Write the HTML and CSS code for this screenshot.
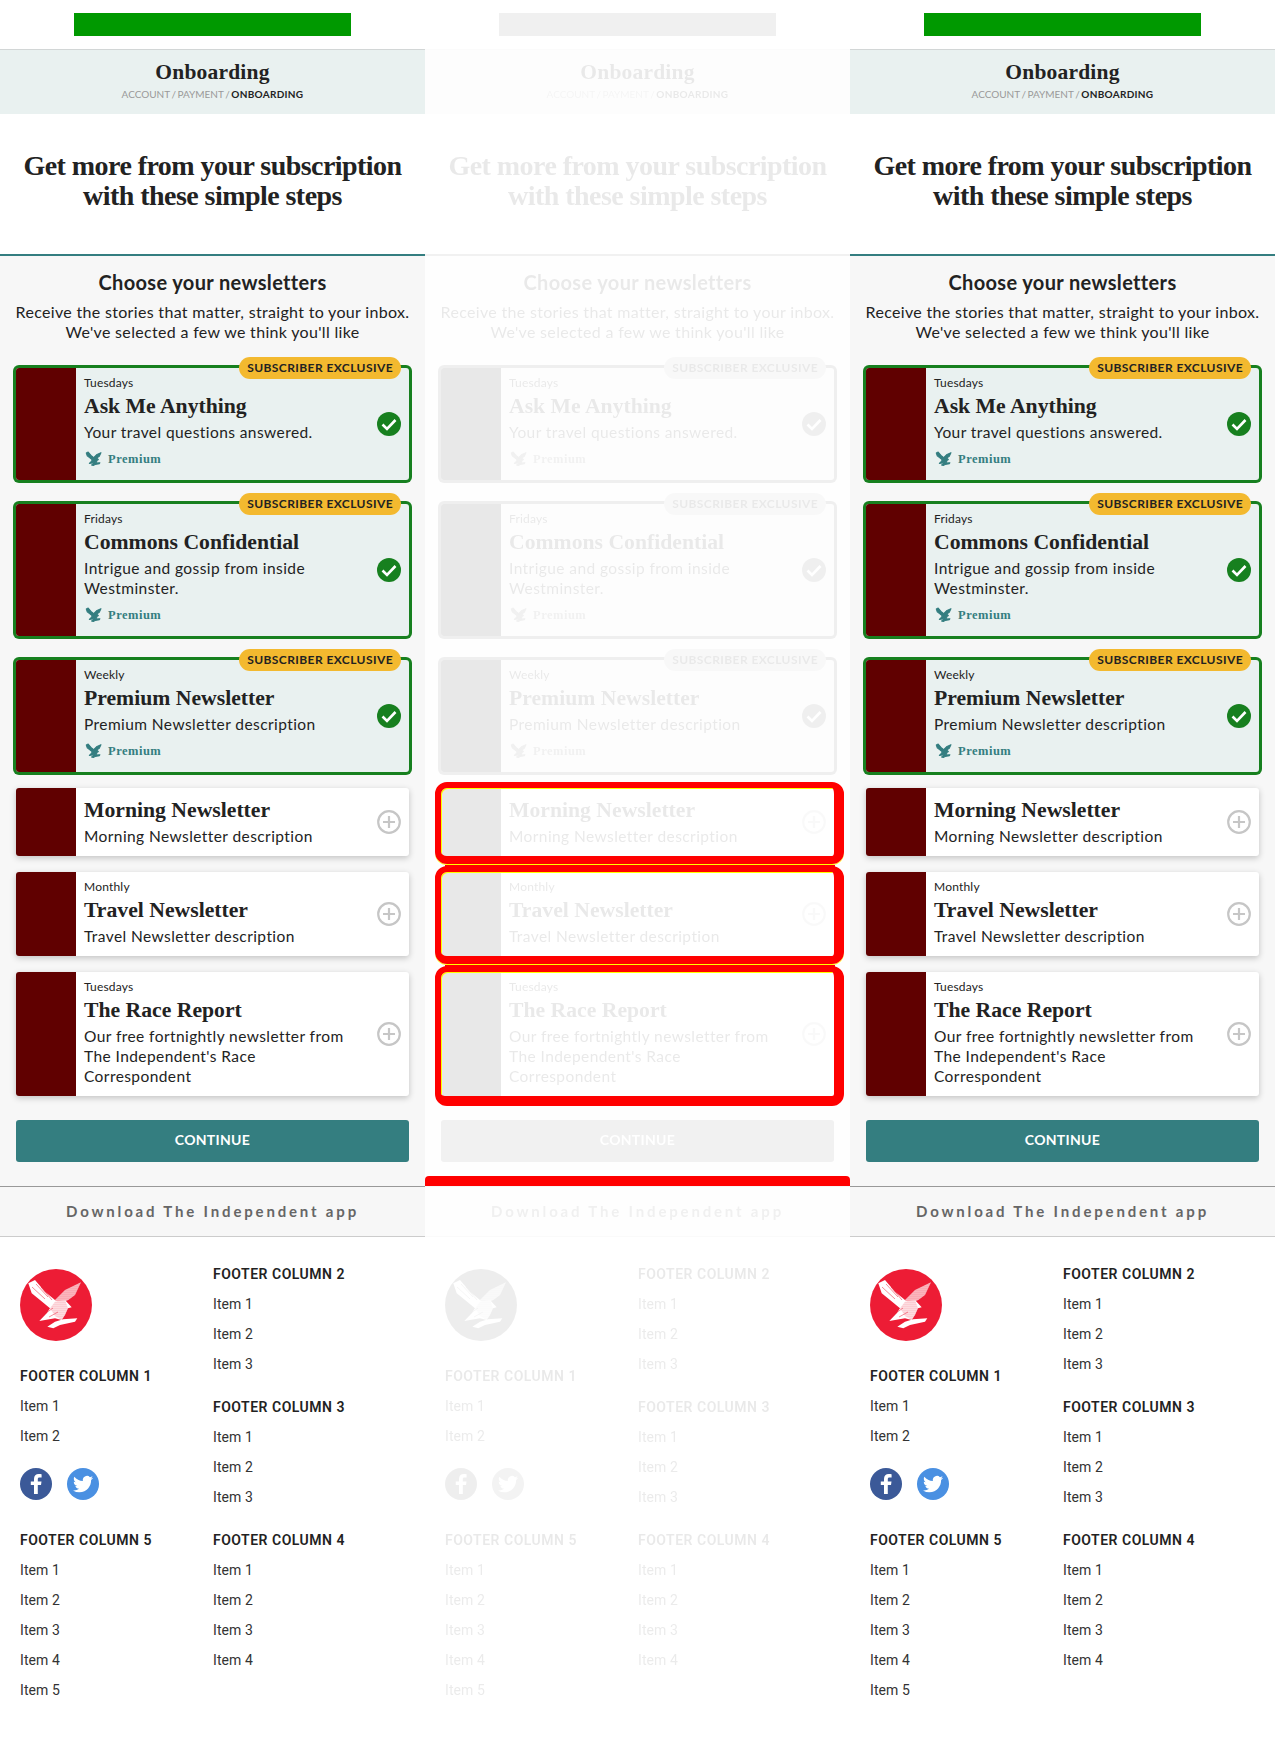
FILE: index.html
```html
<!DOCTYPE html>
<html lang="en">
<head>
<meta charset="utf-8">
<title>Onboarding</title>
<link rel="stylesheet" href="styles.css">
</head>
<body>
<svg class="defs" width="0" height="0" aria-hidden="true">
  <defs>
    <pattern id="dots" width="2" height="2" patternUnits="userSpaceOnUse">
      <circle cx="1" cy="1" r=".5" fill="#ed1c35"/>
    </pattern>
    <symbol id="eagle" viewBox="0 0 72 72">
      <path d="M8.3 14.3 15 11 25 22.7 35 31 45 21 61 13.3 55 26 48.3 31 45 31 51.7 38.3 48 39.3 45 46 41.7 50.3 57.3 49.3 55 52.7 40 56 33.3 59.3 27.3 57.7 35 52.7 35 49.3 19.3 52 26.7 44.3 30 39.3 20 31 11.7 24.3Z" fill="currentColor" stroke="currentColor" stroke-width="4" stroke-linejoin="round"/>
    </symbol>
    <symbol id="check" viewBox="0 0 24 24">
      <circle cx="12" cy="12" r="12" fill="#17801f"/>
      <path d="M5.5 12.5 10 17 18.5 8" fill="none" stroke="#fff" stroke-width="2.6"/>
    </symbol>
    <symbol id="plus" viewBox="0 0 24 24">
      <circle cx="12" cy="12" r="10.8" fill="none" stroke="#c6c6c6" stroke-width="2.2"/>
      <path d="M12 6v12M6 12h12" fill="none" stroke="#c6c6c6" stroke-width="2.2"/>
    </symbol>
    <symbol id="logo" viewBox="0 0 72 72">
      <circle cx="36" cy="36" r="36" fill="#ed1c35"/>
      <path d="M8.3 14.3 15 11 25 22.7 35 31 39 33 35 38 30 39.3 20 31 11.7 24.3Z" fill="#fff"/>
      <path d="M61 13.3 55 26 48.3 31 40 34.3 35 31 45 21Z" fill="#fff" fill-opacity=".8"/>
      <path d="M61 13.3 55 26 48.3 31 40 34.3 35 31 45 21Z" fill="url(#dots)"/>
      <path d="M35 32.7 45 31 51.7 38.3 48 39.3 45 46 41.7 51 35 49.3 19.3 52 26.7 44.3 30 39.3Z" fill="#fff"/>
      <path d="M35 32.7 45 31 48 39.3 45 46 41.7 51 35 47 30 39.3Z" fill="url(#dots)"/>
      <path d="M43 50.3 57.3 49.3 55 52.7 40 56 33.3 59.3 27.3 57.7 35 52.7Z" fill="#fff"/>
      <path d="M12 18 25 30M16 15 28 28M21 18 32 31M26 44 33 39M29 48 38 43" fill="none" stroke="#ed1c35" stroke-width=".5"/>
    </symbol>
    <symbol id="facebook" viewBox="0 0 32 32">
      <circle cx="16" cy="16" r="16" fill="#3b5998"/>
      <path d="M17.8 26v-9h3.2l.5-3.6h-3.7v-2.1c0-1 .4-1.7 1.8-1.7h2V6.3c-.4 0-1.5-.2-2.9-.2-2.8 0-4.7 1.7-4.7 4.8v2.5h-3.2V17H14v9z" fill="#fff"/>
    </symbol>
    <symbol id="twitter" viewBox="0 0 32 32">
      <circle cx="16" cy="16" r="16" fill="#4a90e2"/>
      <g transform="translate(6 6) scale(.84)">
        <path d="M23.953 4.57a10 10 0 01-2.825.775 4.958 4.958 0 002.163-2.723c-.951.555-2.005.959-3.127 1.184a4.92 4.92 0 00-8.384 4.482C7.69 8.095 4.067 6.13 1.64 3.162a4.822 4.822 0 00-.666 2.475c0 1.71.87 3.213 2.188 4.096a4.904 4.904 0 01-2.228-.616v.06a4.923 4.923 0 003.946 4.827 4.996 4.996 0 01-2.212.085 4.936 4.936 0 004.604 3.417 9.867 9.867 0 01-6.102 2.105c-.39 0-.779-.023-1.17-.067a13.995 13.995 0 007.557 2.209c9.053 0 13.998-7.496 13.998-13.985 0-.21 0-.42-.015-.63A9.935 9.935 0 0024 4.59z" fill="#fff"/>
      </g>
    </symbol>
  </defs>
</svg>

<div class="stage">

  <!-- Column 1 -->
  <div class="screen">
    <header class="masthead"><div class="brand-bar"></div></header>
    <div class="crumbs">
      <div class="crumbs-title">Onboarding</div>
      <div class="crumbs-path">ACCOUNT / PAYMENT / <b>ONBOARDING</b></div>
    </div>
    <div class="hero"><h1>Get more from your subscription<br>with these simple steps</h1></div>
    <main class="panel">
      <h2>Choose your newsletters</h2>
      <p class="lede">Receive the stories that matter, straight to your inbox.<br>We've selected a few we think you'll like</p>
      <div class="list">
        <article class="card selected">
          <span class="badge">SUBSCRIBER EXCLUSIVE</span>
          <div class="thumb"></div>
          <div class="body">
            <div class="day">Tuesdays</div>
            <h3>Ask Me Anything</h3>
            <p>Your travel questions answered.</p>
            <div class="premium"><svg class="premium-icon"><use href="#eagle"/></svg>Premium</div>
          </div>
          <svg class="state"><use href="#check"/></svg>
        </article>
        <article class="card selected">
          <span class="badge">SUBSCRIBER EXCLUSIVE</span>
          <div class="thumb"></div>
          <div class="body">
            <div class="day">Fridays</div>
            <h3>Commons Confidential</h3>
            <p>Intrigue and gossip from inside Westminster.</p>
            <div class="premium"><svg class="premium-icon"><use href="#eagle"/></svg>Premium</div>
          </div>
          <svg class="state"><use href="#check"/></svg>
        </article>
        <article class="card selected">
          <span class="badge">SUBSCRIBER EXCLUSIVE</span>
          <div class="thumb"></div>
          <div class="body">
            <div class="day">Weekly</div>
            <h3>Premium Newsletter</h3>
            <p>Premium Newsletter description</p>
            <div class="premium"><svg class="premium-icon"><use href="#eagle"/></svg>Premium</div>
          </div>
          <svg class="state"><use href="#check"/></svg>
        </article>
        <article class="card">
          <div class="thumb"></div>
          <div class="body">
            <h3>Morning Newsletter</h3>
            <p>Morning Newsletter description</p>
          </div>
          <svg class="state"><use href="#plus"/></svg>
        </article>
        <article class="card">
          <div class="thumb"></div>
          <div class="body">
            <div class="day">Monthly</div>
            <h3>Travel Newsletter</h3>
            <p>Travel Newsletter description</p>
          </div>
          <svg class="state"><use href="#plus"/></svg>
        </article>
        <article class="card">
          <div class="thumb"></div>
          <div class="body">
            <div class="day">Tuesdays</div>
            <h3>The Race Report</h3>
            <p>Our free fortnightly newsletter from The Independent's Race Correspondent</p>
          </div>
          <svg class="state"><use href="#plus"/></svg>
        </article>
      </div>
      <button class="continue" type="button">CONTINUE</button>
    </main>
    <div class="download">Download The Independent app</div>
    <footer class="footer">
      <div class="footer-left">
        <svg class="logo"><use href="#logo"/></svg>
        <div class="group g-first"><h4>FOOTER COLUMN 1</h4><ul><li>Item 1</li><li>Item 2</li></ul></div>
        <div class="social"><svg class="social-icon"><use href="#facebook"/></svg><svg class="social-icon"><use href="#twitter"/></svg></div>
        <div class="group g-last"><h4>FOOTER COLUMN 5</h4><ul><li>Item 1</li><li>Item 2</li><li>Item 3</li><li>Item 4</li><li>Item 5</li></ul></div>
      </div>
      <div class="footer-right">
        <div class="group"><h4>FOOTER COLUMN 2</h4><ul><li>Item 1</li><li>Item 2</li><li>Item 3</li></ul></div>
        <div class="group"><h4>FOOTER COLUMN 3</h4><ul><li>Item 1</li><li>Item 2</li><li>Item 3</li></ul></div>
        <div class="group"><h4>FOOTER COLUMN 4</h4><ul><li>Item 1</li><li>Item 2</li><li>Item 3</li><li>Item 4</li></ul></div>
      </div>
    </footer>
  </div>

  <!-- Column 2: faded state with highlighted regions -->
  <div class="ghost-wrap">
    <div class="screen ghost">
      <header class="masthead"><div class="brand-bar"></div></header>
      <div class="crumbs">
        <div class="crumbs-title">Onboarding</div>
        <div class="crumbs-path">ACCOUNT / PAYMENT / <b>ONBOARDING</b></div>
      </div>
      <div class="hero"><h1>Get more from your subscription<br>with these simple steps</h1></div>
      <main class="panel">
        <h2>Choose your newsletters</h2>
        <p class="lede">Receive the stories that matter, straight to your inbox.<br>We've selected a few we think you'll like</p>
        <div class="list">
          <article class="card selected">
            <span class="badge">SUBSCRIBER EXCLUSIVE</span>
            <div class="thumb"></div>
            <div class="body">
              <div class="day">Tuesdays</div>
              <h3>Ask Me Anything</h3>
              <p>Your travel questions answered.</p>
              <div class="premium"><svg class="premium-icon"><use href="#eagle"/></svg>Premium</div>
            </div>
            <svg class="state"><use href="#check"/></svg>
          </article>
          <article class="card selected">
            <span class="badge">SUBSCRIBER EXCLUSIVE</span>
            <div class="thumb"></div>
            <div class="body">
              <div class="day">Fridays</div>
              <h3>Commons Confidential</h3>
              <p>Intrigue and gossip from inside Westminster.</p>
              <div class="premium"><svg class="premium-icon"><use href="#eagle"/></svg>Premium</div>
            </div>
            <svg class="state"><use href="#check"/></svg>
          </article>
          <article class="card selected">
            <span class="badge">SUBSCRIBER EXCLUSIVE</span>
            <div class="thumb"></div>
            <div class="body">
              <div class="day">Weekly</div>
              <h3>Premium Newsletter</h3>
              <p>Premium Newsletter description</p>
              <div class="premium"><svg class="premium-icon"><use href="#eagle"/></svg>Premium</div>
            </div>
            <svg class="state"><use href="#check"/></svg>
          </article>
          <article class="card">
            <div class="thumb"></div>
            <div class="body">
              <h3>Morning Newsletter</h3>
              <p>Morning Newsletter description</p>
            </div>
            <svg class="state"><use href="#plus"/></svg>
          </article>
          <article class="card">
            <div class="thumb"></div>
            <div class="body">
              <div class="day">Monthly</div>
              <h3>Travel Newsletter</h3>
              <p>Travel Newsletter description</p>
            </div>
            <svg class="state"><use href="#plus"/></svg>
          </article>
          <article class="card">
            <div class="thumb"></div>
            <div class="body">
              <div class="day">Tuesdays</div>
              <h3>The Race Report</h3>
              <p>Our free fortnightly newsletter from The Independent's Race Correspondent</p>
            </div>
            <svg class="state"><use href="#plus"/></svg>
          </article>
        </div>
        <button class="continue" type="button">CONTINUE</button>
      </main>
      <div class="download">Download The Independent app</div>
      <footer class="footer">
        <div class="footer-left">
          <svg class="logo"><use href="#logo"/></svg>
          <div class="group g-first"><h4>FOOTER COLUMN 1</h4><ul><li>Item 1</li><li>Item 2</li></ul></div>
          <div class="social"><svg class="social-icon"><use href="#facebook"/></svg><svg class="social-icon"><use href="#twitter"/></svg></div>
          <div class="group g-last"><h4>FOOTER COLUMN 5</h4><ul><li>Item 1</li><li>Item 2</li><li>Item 3</li><li>Item 4</li><li>Item 5</li></ul></div>
        </div>
        <div class="footer-right">
          <div class="group"><h4>FOOTER COLUMN 2</h4><ul><li>Item 1</li><li>Item 2</li><li>Item 3</li></ul></div>
          <div class="group"><h4>FOOTER COLUMN 3</h4><ul><li>Item 1</li><li>Item 2</li><li>Item 3</li></ul></div>
          <div class="group"><h4>FOOTER COLUMN 4</h4><ul><li>Item 1</li><li>Item 2</li><li>Item 3</li><li>Item 4</li></ul></div>
        </div>
      </footer>
    </div>
    <div class="ring ring-morning"></div>
    <div class="seam seam-one"></div>
    <div class="ring ring-travel"></div>
    <div class="seam seam-two"></div>
    <div class="ring ring-race"></div>
    <div class="diff-bar"></div>
  </div>

  <!-- Column 3 -->
  <div class="screen">
    <header class="masthead"><div class="brand-bar"></div></header>
    <div class="crumbs">
      <div class="crumbs-title">Onboarding</div>
      <div class="crumbs-path">ACCOUNT / PAYMENT / <b>ONBOARDING</b></div>
    </div>
    <div class="hero"><h1>Get more from your subscription<br>with these simple steps</h1></div>
    <main class="panel">
      <h2>Choose your newsletters</h2>
      <p class="lede">Receive the stories that matter, straight to your inbox.<br>We've selected a few we think you'll like</p>
      <div class="list">
        <article class="card selected">
          <span class="badge">SUBSCRIBER EXCLUSIVE</span>
          <div class="thumb"></div>
          <div class="body">
            <div class="day">Tuesdays</div>
            <h3>Ask Me Anything</h3>
            <p>Your travel questions answered.</p>
            <div class="premium"><svg class="premium-icon"><use href="#eagle"/></svg>Premium</div>
          </div>
          <svg class="state"><use href="#check"/></svg>
        </article>
        <article class="card selected">
          <span class="badge">SUBSCRIBER EXCLUSIVE</span>
          <div class="thumb"></div>
          <div class="body">
            <div class="day">Fridays</div>
            <h3>Commons Confidential</h3>
            <p>Intrigue and gossip from inside Westminster.</p>
            <div class="premium"><svg class="premium-icon"><use href="#eagle"/></svg>Premium</div>
          </div>
          <svg class="state"><use href="#check"/></svg>
        </article>
        <article class="card selected">
          <span class="badge">SUBSCRIBER EXCLUSIVE</span>
          <div class="thumb"></div>
          <div class="body">
            <div class="day">Weekly</div>
            <h3>Premium Newsletter</h3>
            <p>Premium Newsletter description</p>
            <div class="premium"><svg class="premium-icon"><use href="#eagle"/></svg>Premium</div>
          </div>
          <svg class="state"><use href="#check"/></svg>
        </article>
        <article class="card">
          <div class="thumb"></div>
          <div class="body">
            <h3>Morning Newsletter</h3>
            <p>Morning Newsletter description</p>
          </div>
          <svg class="state"><use href="#plus"/></svg>
        </article>
        <article class="card">
          <div class="thumb"></div>
          <div class="body">
            <div class="day">Monthly</div>
            <h3>Travel Newsletter</h3>
            <p>Travel Newsletter description</p>
          </div>
          <svg class="state"><use href="#plus"/></svg>
        </article>
        <article class="card">
          <div class="thumb"></div>
          <div class="body">
            <div class="day">Tuesdays</div>
            <h3>The Race Report</h3>
            <p>Our free fortnightly newsletter from The Independent's Race Correspondent</p>
          </div>
          <svg class="state"><use href="#plus"/></svg>
        </article>
      </div>
      <button class="continue" type="button">CONTINUE</button>
    </main>
    <div class="download">Download The Independent app</div>
    <footer class="footer">
      <div class="footer-left">
        <svg class="logo"><use href="#logo"/></svg>
        <div class="group g-first"><h4>FOOTER COLUMN 1</h4><ul><li>Item 1</li><li>Item 2</li></ul></div>
        <div class="social"><svg class="social-icon"><use href="#facebook"/></svg><svg class="social-icon"><use href="#twitter"/></svg></div>
        <div class="group g-last"><h4>FOOTER COLUMN 5</h4><ul><li>Item 1</li><li>Item 2</li><li>Item 3</li><li>Item 4</li><li>Item 5</li></ul></div>
      </div>
      <div class="footer-right">
        <div class="group"><h4>FOOTER COLUMN 2</h4><ul><li>Item 1</li><li>Item 2</li><li>Item 3</li></ul></div>
        <div class="group"><h4>FOOTER COLUMN 3</h4><ul><li>Item 1</li><li>Item 2</li><li>Item 3</li></ul></div>
        <div class="group"><h4>FOOTER COLUMN 4</h4><ul><li>Item 1</li><li>Item 2</li><li>Item 3</li><li>Item 4</li></ul></div>
      </div>
    </footer>
  </div>

</div>
</body>
</html>
```

FILE: styles.css
```css
* { box-sizing: border-box; }
html, body { margin: 0; padding: 0; background: #fff; }
body { font-family: "Lato", "Liberation Sans", sans-serif; color: #222; overflow-x: hidden; }
.defs { position: absolute; }

.stage { display: grid; grid-template-columns: repeat(3, 425px); min-height: 1758px; }
.screen { width: 425px; background: #fff; }

.masthead { height: 50px; padding-top: 13px; border-bottom: 1px solid #d2d6d6; display: flex; justify-content: center; }
.brand-bar { width: 277px; height: 23px; background: #009900; }

.crumbs { height: 64px; background: #e9f1f0; text-align: center; padding-top: 8px; }
.crumbs-title { font-family: "Liberation Serif", serif; font-weight: 700; font-size: 21.5px; line-height: 28px; letter-spacing: .2px; }
.crumbs-path { font-size: 10px; line-height: 14px; margin-top: 1px; color: #999; word-spacing: -1px; }
.crumbs-path b { color: #222; letter-spacing: .3px; }

.hero { height: 142px; padding-top: 37px; border-bottom: 2px solid #347e80; text-align: center; }
.hero h1 { margin: 0; font-family: "Liberation Serif", serif; font-weight: 700; font-size: 28px; line-height: 30px; letter-spacing: -.55px; }

.panel { background: #f7f7f7; padding: 14px 16px 24px; height: 930px; }
.panel h2 { margin: 0; font-size: 20px; line-height: 24px; font-weight: 700; text-align: center; letter-spacing: .35px; }
.lede { margin: 8px -4px 0; font-size: 16px; line-height: 20px; text-align: center; letter-spacing: .32px; }

.list { margin-top: 18px; display: flex; flex-direction: column; gap: 16px; }
.card { position: relative; display: flex; align-items: stretch; background: #fff; border-radius: 3px; box-shadow: 0 2px 6px rgba(0,0,0,.22); }
.card.selected { margin-top: 8px; background: #e9f1f0; box-shadow: 0 0 0 3px #17801f; }
.thumb { width: 60px; flex: none; background: #600000; border-radius: 3px 0 0 3px; }
.body { flex: 1; min-width: 0; padding: 7px 20px 10px 8px; }
.day { font-size: 12px; line-height: 16px; letter-spacing: .2px; }
.body h3 { margin: 0; padding-top: 1px; font-family: "Liberation Serif", serif; font-weight: 700; font-size: 21.7px; line-height: 28px; }
.body p { margin: 2px 0 0; font-size: 15.5px; line-height: 20px; letter-spacing: .42px; }
.premium { display: flex; align-items: center; height: 20px; margin: 7px 0 1px; gap: 4px; font-family: "Liberation Serif", serif; font-weight: 700; font-size: 12.5px; letter-spacing: .5px; color: #347e80; }
.premium-icon { width: 20px; height: 20px; color: #347e80; flex: none; }
.state { width: 24px; height: 24px; flex: none; align-self: center; margin-right: 8px; }
.badge { position: absolute; top: -11px; right: 8px; height: 22px; line-height: 22px; padding: 0 8px; border-radius: 11px; background: #f3b92f; font-size: 12px; font-weight: 700; letter-spacing: .42px; white-space: nowrap; }

.continue { display: block; width: 100%; height: 42px; margin-top: 24px; padding: 0 0 4px; border: 0; border-radius: 3px; background: #347e80; color: #fff; font-family: inherit; font-size: 14px; font-weight: 700; letter-spacing: .3px; }

.download { height: 51px; background: #f7f7f7; border-top: 1px solid #999; border-bottom: 1px solid #ccc; text-align: center; font-size: 15px; font-weight: 700; line-height: 48px; letter-spacing: 2.82px; color: #666; }

.footer { display: grid; grid-template-columns: 193px 1fr; padding-left: 20px; font-family: "Roboto", sans-serif; }
.footer-left { padding-top: 32px; }
.footer-right { padding-top: 27px; }
.logo { display: block; width: 72px; height: 72px; }
.group h4 { margin: 0 0 5px; font-size: 14px; line-height: 20px; font-weight: 600; letter-spacing: .5px; color: #222; }
.group ul { margin: 0; padding: 0; list-style: none; }
.group li { font-size: 14px; line-height: 30px; letter-spacing: .1px; color: #333; }
.footer-right .group + .group { margin-top: 18px; }
.g-first { margin-top: 25px; }
.g-last { margin-top: 30px; }
.social { margin-top: 17px; display: flex; gap: 15px; }
.social-icon { width: 32px; height: 32px; display: block; }

/* Faded middle column and its highlights */
.ghost-wrap { position: relative; width: 425px; }
.ghost { filter: grayscale(1) opacity(.1); }
.ring { position: absolute; left: 10px; width: 409px; border: solid #f00; border-width: 6px 10px 8px 6px; border-radius: 12px; box-shadow: inset 1px 1px 0 #ff0, 0 1px 0 #ff0; }
.ring-morning { top: 782px; height: 82px; }
.ring-travel { top: 866px; height: 98px; }
.ring-race { top: 966px; height: 140px; border-bottom-width: 10px; box-shadow: inset 1px 1px 0 #ff0; }
.seam { position: absolute; left: 20px; width: 390px; height: 3px; background: #f00; border-bottom: 1px solid #ff0; }
.seam-one { top: 865px; }
.seam-two { top: 965px; }
.diff-bar { position: absolute; top: 1176px; left: 0; width: 425px; height: 10px; background: #f00; border-radius: 4px 4px 0 0; }
```
